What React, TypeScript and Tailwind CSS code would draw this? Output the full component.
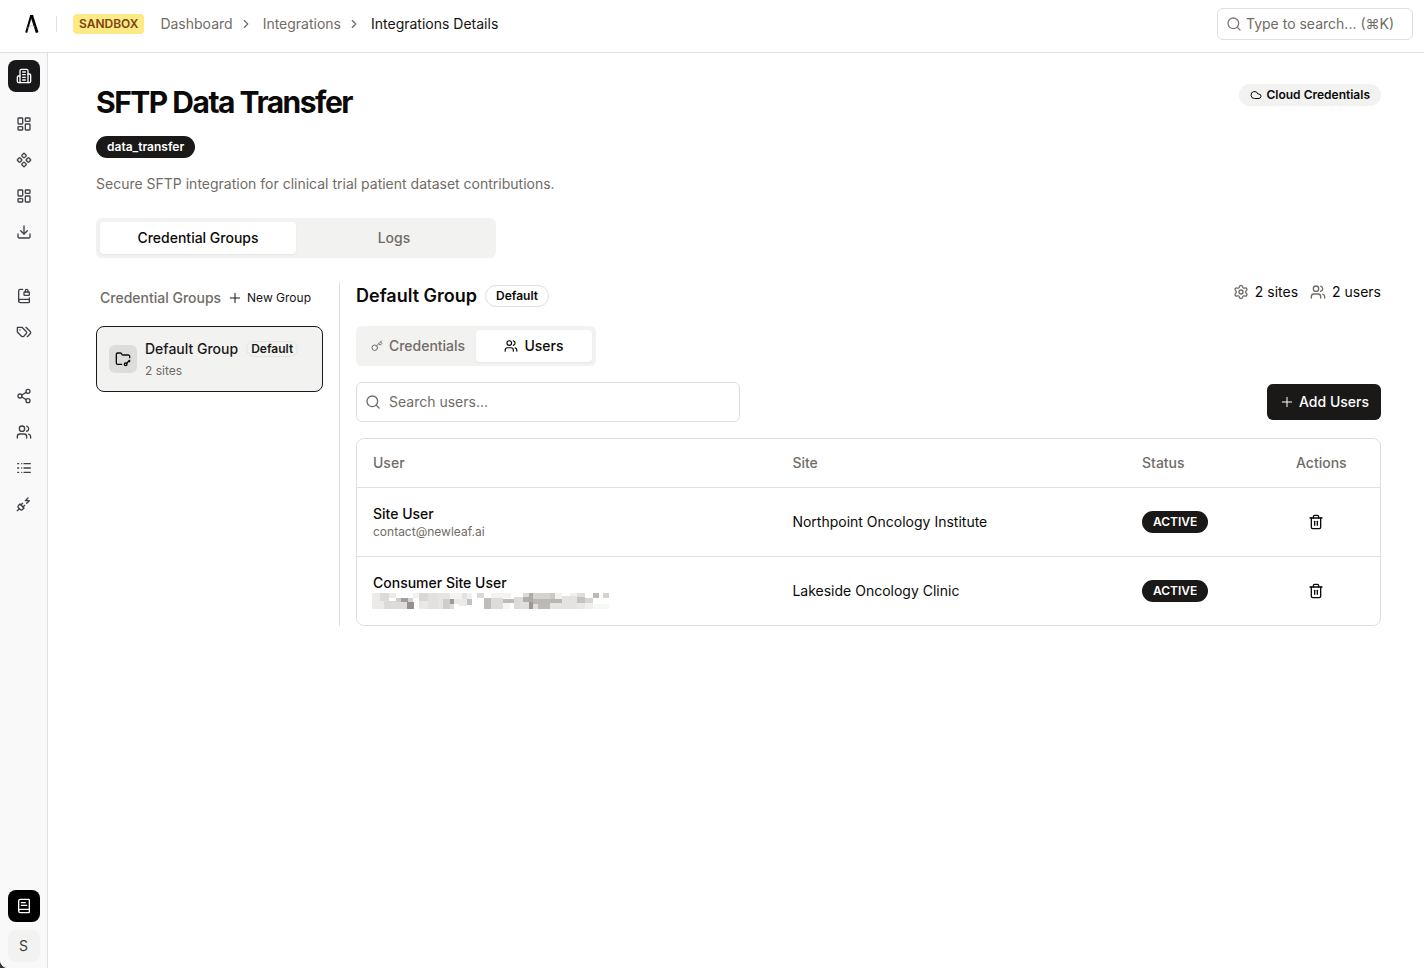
import { useState, type ComponentType, type ReactNode } from 'react';
import {
  BookLock,
  BookText,
  ChevronRight,
  Cloud,
  Component,
  Download,
  FolderKey,
  Key,
  LayoutDashboard,
  Plus,
  PlugZap,
  Search,
  Settings,
  Share2,
  Trash2,
  Users,
} from 'lucide-react';

type IconProps = { className?: string };

function StrokeIcon({ className, children }: IconProps & { children: ReactNode }) {
  return (
    <svg
      viewBox="0 0 24 24"
      className={className}
      fill="none"
      stroke="currentColor"
      strokeWidth="2"
      strokeLinecap="round"
      strokeLinejoin="round"
      aria-hidden="true"
    >
      {children}
    </svg>
  );
}

function BuildingIcon({ className }: IconProps) {
  return (
    <StrokeIcon className={className}>
      <path d="M6 22V4a2 2 0 0 1 2-2h8a2 2 0 0 1 2 2v18Z" />
      <path d="M6 12H4a2 2 0 0 0-2 2v6a2 2 0 0 0 2 2h2" />
      <path d="M18 9h2a2 2 0 0 1 2 2v9a2 2 0 0 1-2 2h-2" />
      <path d="M10 6h4M10 10h4M10 14h4M10 18h4" />
    </StrokeIcon>
  );
}

function TagsIcon({ className }: IconProps) {
  return (
    <StrokeIcon className={className}>
      <path d="M9 5H2v7l6.29 6.29c.94.94 2.48.94 3.42 0l3.58-3.58c.94-.94.94-2.48 0-3.42L9 5Z" />
      <path d="M6 9.01V9" />
      <path d="m15 5 6.3 6.3a2.4 2.4 0 0 1 0 3.4L17 19" />
    </StrokeIcon>
  );
}

function ListIcon({ className }: IconProps) {
  return (
    <StrokeIcon className={className}>
      <path d="M2.5 5.5H4M2.5 12H4M2.5 18.5H4" />
      <path d="M8.5 5.5h.01M8.5 12h.01M8.5 18.5h.01" />
      <path d="M12 5.5h9.5M12 12h9.5M12 18.5h9.5" />
    </StrokeIcon>
  );
}

const navGroups: { label: string; icon: ComponentType<IconProps> }[][] = [
  [
    { label: 'Dashboard', icon: LayoutDashboard },
    { label: 'Components', icon: Component },
    { label: 'Overview', icon: LayoutDashboard },
    { label: 'Downloads', icon: Download },
  ],
  [
    { label: 'Protocols', icon: BookLock },
    { label: 'Tags', icon: TagsIcon },
  ],
  [
    { label: 'Sharing', icon: Share2 },
    { label: 'Users', icon: Users },
    { label: 'Lists', icon: ListIcon },
    { label: 'Integrations', icon: PlugZap },
  ],
];

const users = [
  { name: 'Site User', email: 'contact@newleaf.ai', site: 'Northpoint Oncology Institute', status: 'ACTIVE' },
  { name: 'Consumer Site User', email: null, site: 'Lakeside Oncology Clinic', status: 'ACTIVE' },
];

// x, y, width, height, fill
const mosaic: [number, number, number, number, string][] = [
  [0, 0, 24, 48, '#ebeae9'],
  [24, 0, 27, 24, '#dddbda'],
  [24, 24, 12, 24, '#ebeae9'],
  [36, 24, 36, 24, '#dbdad8'],
  [51, 0, 21, 15, '#eceaea'],
  [72, 15, 14, 12, '#cfcdcb'],
  [86, 15, 22, 12, '#a19c97'],
  [108, 15, 16, 12, '#d3d1cf'],
  [56, 27, 50, 21, '#dddcda'],
  [106, 27, 19, 21, '#96908b'],
  [124, 0, 16, 15, '#f3f2f2'],
  [140, 0, 28, 24, '#d9d8d6'],
  [140, 24, 28, 24, '#e9e8e7'],
  [168, 0, 30, 48, '#e2e1e0'],
  [198, 0, 35, 20, '#e6e5e4'],
  [198, 20, 14, 28, '#e6e5e4'],
  [212, 18, 21, 30, '#cfcdcb'],
  [233, 18, 12, 16, '#9e9994'],
  [233, 0, 36, 18, '#f3f3f2'],
  [245, 18, 24, 16, '#e9e8e7'],
  [233, 34, 14, 14, '#dddcda'],
  [269, 0, 16, 18, '#e4e2e1'],
  [285, 0, 14, 18, '#f1f0f0'],
  [260, 18, 24, 20, '#ebeae9'],
  [284, 18, 16, 18, '#c4c1be'],
  [314, 0, 22, 15, '#dad8d6'],
  [336, 15, 20, 33, '#c0bcb9'],
  [356, 0, 60, 15, '#f3f2f2'],
  [356, 15, 37, 33, '#dddbd9'],
  [393, 18, 32, 12, '#bdb9b6'],
  [393, 30, 20, 18, '#f6f5f5'],
  [425, 12, 27, 36, '#dcdbd9'],
  [452, 0, 18, 12, '#dddbda'],
  [452, 12, 20, 16, '#b1adaa'],
  [470, 0, 13, 28, '#aeaaa6'],
  [440, 28, 30, 20, '#e0dedd'],
  [470, 28, 13, 20, '#9c9792'],
  [483, 0, 50, 18, '#d5d3d1'],
  [483, 18, 50, 14, '#bcb8b5'],
  [483, 32, 14, 16, '#e0dfdd'],
  [497, 32, 36, 16, '#bfbab7'],
  [533, 0, 16, 18, '#cbc8c6'],
  [533, 18, 36, 12, '#bab6b2'],
  [533, 30, 36, 18, '#e5e4e3'],
  [549, 0, 22, 18, '#f1f1f0'],
  [569, 10, 46, 38, '#e4e3e2'],
  [595, 0, 20, 10, '#f1f0f0'],
  [615, 0, 24, 12, '#dedddb'],
  [615, 12, 24, 18, '#c5c2bf'],
  [615, 30, 24, 18, '#e8e7e6'],
  [639, 14, 24, 16, '#d7d5d3'],
  [639, 30, 24, 18, '#f0efef'],
  [663, 0, 18, 14, '#bdb8b5'],
  [693, 0, 18, 14, '#d5d3d1'],
  [663, 32, 48, 16, '#f7f7f6'],
];

function RedactedEmail() {
  return (
    <svg viewBox="0 0 711 48" className="-ml-px h-4 w-[237px]" aria-hidden="true" shapeRendering="crispEdges">
      {mosaic.map(([x, y, w, h, fill]) => (
        <rect key={`${x}-${y}`} x={x} y={y} width={w} height={h} fill={fill} />
      ))}
    </svg>
  );
}

function Logo() {
  return (
    <svg viewBox="0 0 14 18" className="h-[18px] w-[14px]" fill="none" stroke="#000" aria-hidden="true">
      <path d="M1.2 17.6 6 1" strokeWidth="2" />
      <path d="M6.6 .4 12.2 17.6" strokeWidth="2.8" />
      <path d="M5 .8h3.2" strokeWidth="1.6" />
      <path d="M2 13.2 6.4 10.6l3.8 1" strokeWidth=".6" stroke="#9ca3af" />
    </svg>
  );
}

function Badge({ className = '', children }: { className?: string; children: ReactNode }) {
  return (
    <span className={`inline-flex items-center rounded-full border text-xs leading-4 font-semibold ${className}`}>
      {children}
    </span>
  );
}

function Header() {
  return (
    <header className="flex items-center justify-between border-b border-[#dfdfdf] bg-white pt-2 pr-[11px] pb-3 pl-[25px]">
      <div className="flex items-center">
        <a href="#" aria-label="Home">
          <Logo />
        </a>
        <div className="mr-4 ml-[17px] h-4 w-px bg-[#dfdfdf]" />
        <span className="rounded bg-[#fdea85] px-1.5 py-0.5 text-xs leading-4 font-semibold text-[#7a4412]">
          SANDBOX
        </span>
        <nav aria-label="Breadcrumb" className="ml-4 flex items-center gap-1.5 text-sm leading-5 text-[#716b66]">
          <a href="#">Dashboard</a>
          <ChevronRight className="size-3.5" />
          <a href="#" className="ml-1">
            Integrations
          </a>
          <ChevronRight className="size-3.5" />
          <span className="ml-1 text-[#141312]">Integrations Details</span>
        </nav>
      </div>
      <label className="flex h-8 w-[196px] items-center gap-1 rounded-md border border-[#dfdfdf] px-2">
        <Search className="size-4 shrink-0 text-[#807b78]" />
        <input
          type="text"
          aria-label="Search"
          placeholder="Type to search... (⌘K)"
          className="w-full min-w-0 text-sm outline-none placeholder:text-[#716b66]"
        />
      </label>
    </header>
  );
}

function Sidebar() {
  return (
    <aside className="flex w-12 shrink-0 flex-col items-center border-r border-[#dfdfdf] bg-[#f9f9f9] pt-[7px] pb-1.5">
      <button
        type="button"
        aria-label="Organization"
        className="flex size-8 items-center justify-center rounded-lg bg-[#18181b] text-white"
      >
        <BuildingIcon className="size-4" />
      </button>
      <nav className="mt-4 flex flex-col gap-8">
        {navGroups.map((group, i) => (
          <ul key={i} className="flex flex-col gap-1">
            {group.map(({ label, icon: Icon }) => (
              <li key={label}>
                <a href="#" aria-label={label} className="flex size-8 items-center justify-center text-[#3f3f46]">
                  <Icon className="size-4" />
                </a>
              </li>
            ))}
          </ul>
        ))}
      </nav>
      <div className="mt-auto flex flex-col gap-2">
        <button
          type="button"
          aria-label="Documentation"
          className="flex size-8 items-center justify-center rounded-lg bg-black text-white"
        >
          <BookText className="size-4" />
        </button>
        <button
          type="button"
          className="flex size-8 items-center justify-center rounded-lg bg-[#f2f2f1] text-sm text-[#3f3f46]"
        >
          S
        </button>
      </div>
    </aside>
  );
}

function GroupList() {
  return (
    <section className="w-[244px] shrink-0 border-r border-[#dfdfdf] pr-4">
      <div className="flex h-8 items-center justify-between pl-1">
        <h3 className="text-sm font-medium text-[#716b66]">Credential Groups</h3>
        <button type="button" className="flex items-center gap-1 pr-3 text-xs text-[#141312]">
          <Plus className="size-4" strokeWidth={1.5} />
          New Group
        </button>
      </div>
      <button
        type="button"
        className="mt-3 flex w-full items-center gap-2 rounded-lg border border-[#1a1918] bg-[#f2f2f1] p-3 text-left"
      >
        <span className="flex size-7 shrink-0 items-center justify-center rounded-md bg-[#dddddc]">
          <FolderKey className="size-4" />
        </span>
        <span className="flex flex-col gap-1">
          <span className="flex items-center gap-2 text-sm leading-5 font-medium text-[#1a1918]">
            Default Group
            <Badge className="h-4 border-[#e4e4e3] px-1">Default</Badge>
          </span>
          <span className="text-xs leading-4 text-[#716b66]">2 sites</span>
        </span>
      </button>
    </section>
  );
}

function UsersTable() {
  return (
    <div className="mt-4 overflow-hidden rounded-lg border border-[#dfdfdf]">
      <table className="w-full table-fixed text-left text-sm leading-5">
        <colgroup>
          <col className="w-[41%]" />
          <col />
          <col className="w-[154px]" />
          <col className="w-[100px]" />
        </colgroup>
        <thead>
          <tr className="h-12 border-b border-[#dfdfdf] text-[#716b66]">
            <th className="px-4 font-medium">User</th>
            <th className="px-4 font-medium">Site</th>
            <th className="px-4 font-medium">Status</th>
            <th className="px-4 font-medium">Actions</th>
          </tr>
        </thead>
        <tbody>
          {users.map((user) => (
            <tr key={user.name} className="border-b border-[#dfdfdf] last:border-0">
              <td className="p-4">
                <div className="font-medium">{user.name}</div>
                <div className="h-4 text-xs leading-4 text-[#716b66]">{user.email ?? <RedactedEmail />}</div>
              </td>
              <td className="p-4">{user.site}</td>
              <td className="p-4">
                <Badge className="border-transparent bg-[#1a1918] px-2.5 py-0.5 text-white">{user.status}</Badge>
              </td>
              <td className="px-4">
                <button
                  type="button"
                  aria-label={`Remove ${user.name}`}
                  className="flex h-9 w-10 items-center justify-center"
                >
                  <Trash2 className="size-4" />
                </button>
              </td>
            </tr>
          ))}
        </tbody>
      </table>
    </div>
  );
}

function GroupDetails() {
  const [query, setQuery] = useState('');

  return (
    <section className="min-w-0 flex-1">
      <div className="flex items-start justify-between">
        <div className="flex h-7 items-center gap-2">
          <h2 className="text-lg leading-7 font-semibold">Default Group</h2>
          <Badge className="border-[#dfdfdf] px-2.5 py-0.5">Default</Badge>
        </div>
        <div className="flex gap-3 text-sm leading-5">
          <span className="flex items-center gap-1.5">
            <Settings className="size-4 text-[#716b66]" />2 sites
          </span>
          <span className="flex items-center gap-1.5">
            <Users className="size-4 text-[#716b66]" />2 users
          </span>
        </div>
      </div>

      <div role="tablist" className="mt-4 flex h-10 w-60 rounded-md bg-[#f2f2f1] p-1 text-sm font-medium">
        <button
          type="button"
          role="tab"
          aria-selected="false"
          className="flex flex-1 items-center justify-center gap-1.5 text-[#716b66]"
        >
          <Key className="size-3" />
          Credentials
        </button>
        <button
          type="button"
          role="tab"
          aria-selected="true"
          className="flex flex-1 items-center justify-center gap-1.5 rounded bg-white shadow-xs"
        >
          <Users className="size-3.5" />
          Users
        </button>
      </div>

      <div className="mt-4 flex items-center justify-between">
        <label className="flex h-10 w-96 items-center gap-2 rounded-md border border-[#dfdfdf] px-2">
          <Search className="size-4 shrink-0 text-[#716b66]" />
          <input
            type="text"
            aria-label="Search users"
            placeholder="Search users..."
            value={query}
            onChange={(e) => setQuery(e.target.value)}
            className="w-full min-w-0 text-sm outline-none placeholder:text-[#716b66]"
          />
        </label>
        <button
          type="button"
          className="flex h-9 items-center gap-1 rounded-md bg-[#1a1918] px-3 text-sm font-medium text-white"
        >
          <Plus className="size-4" strokeWidth={1.5} />
          Add Users
        </button>
      </div>

      <UsersTable />
    </section>
  );
}

export default function App() {
  return (
    <div className="bg-[#333]">
      <div className="flex min-h-screen flex-col overflow-hidden rounded-bl-lg bg-white font-['Inter','Liberation_Sans',sans-serif] text-[#0c0a09]">
        <Header />
        <div className="flex flex-1">
          <Sidebar />
          <main className="min-w-0 flex-1 pt-[31px] pr-[43px] pb-8 pl-12">
            <div className="flex items-start justify-between">
              <div>
                <h1 className="text-3xl leading-9 font-bold tracking-tighter">SFTP Data Transfer</h1>
                <Badge className="mt-4 border-transparent bg-[#1a1918] px-2.5 py-0.5 text-white">data_transfer</Badge>
                <p className="mt-4 text-sm leading-5 text-[#716b66]">
                  Secure SFTP integration for clinical trial patient dataset contributions.
                </p>
              </div>
              <Badge className="gap-1 border-transparent bg-[#f2f2f1] px-2.5 py-0.5">
                <Cloud className="size-3" />
                Cloud Credentials
              </Badge>
            </div>

            <div role="tablist" className="mt-6 flex h-10 w-[400px] rounded-md bg-[#f2f2f1] p-1 text-sm font-medium">
              <button type="button" role="tab" aria-selected="true" className="flex-1 rounded bg-white shadow-xs">
                Credential Groups
              </button>
              <button type="button" role="tab" aria-selected="false" className="flex-1 text-[#716b66]">
                Logs
              </button>
            </div>

            <div className="mt-6 flex gap-4">
              <GroupList />
              <GroupDetails />
            </div>
          </main>
        </div>
      </div>
    </div>
  );
}
